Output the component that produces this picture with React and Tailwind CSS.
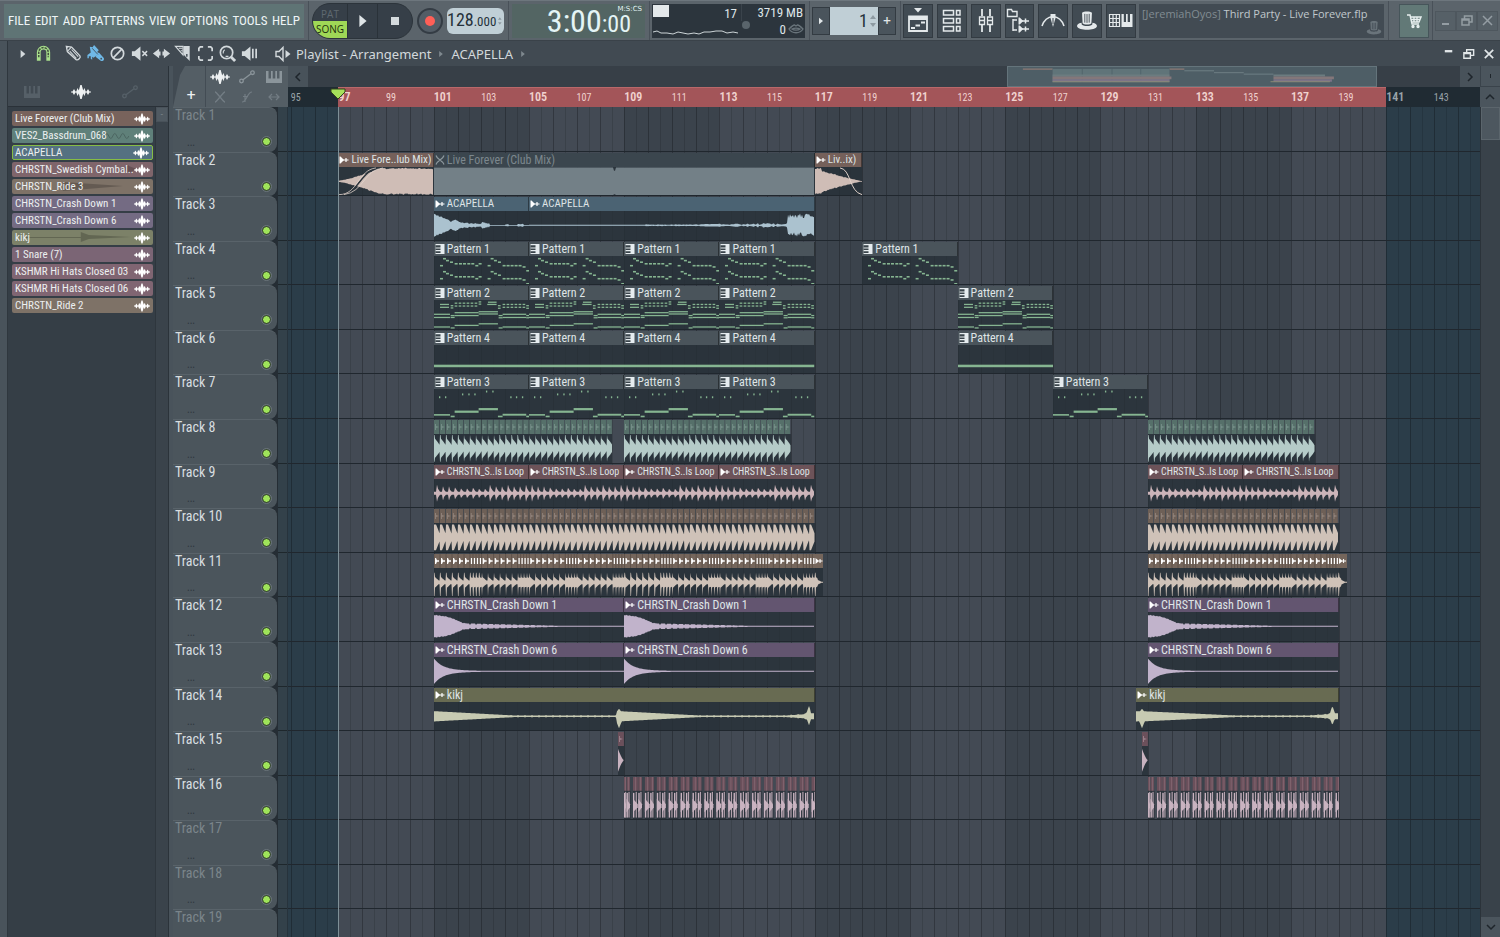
import React from "react";

const NARROW =
  "font-['Liberation_Sans_Narrow','Roboto_Condensed','Open_Sans_Condensed','Roboto',sans-serif]";
const SANS = "font-['Open_Sans','Noto_Sans',sans-serif]";
const TITLE = "font-['Noto_Sans','Open_Sans',sans-serif]";

/* ---------- timeline geometry ---------- */
const START = 94.88;
const SPAN = 50.06;
const BAR = 23.81;
const pct = (bar) => `${((bar - START) / SPAN) * 100}%`;
const wid = (bars) => `${(bars / SPAN) * 100}%`;

/* ---------- wave forms ---------- */
const rnd = (n) => {
  const s = Math.sin(n * 127.1 + 11.7) * 43758.5453;
  return s - Math.floor(s);
};

function envelope(w, fn, step = 1) {
  const top = [];
  const bottom = [];
  for (let x = 0; x <= w; x += step) {
    const v = fn(x, w);
    const [a, b] = Array.isArray(v) ? v : [v, v];
    top.push(`${x.toFixed(1)},${(15 - a).toFixed(2)}`);
    bottom.unshift(`${x.toFixed(1)},${(15 + b).toFixed(2)}`);
  }
  return `M${top.join("L")}L${bottom.join("L")}Z`;
}

const QUARTER = BAR / 4;
const BUSY = [0, 6, 12, 18, 24, 30, 36, 39, 42, 45];

const waves = {
  fadeIn: (x, w) => {
    const t = x / w;
    const base = t < 0.42 ? 0.6 + 13 * Math.pow(t / 0.42, 1.3) : 14.2;
    return [base - rnd(x) * 1.6 * Math.min(1, t * 3), base - rnd(x + 50) * 1.6 * Math.min(1, t * 3)];
  },
  fadeOut: (x, w) => {
    const t = x / w;
    const base = t < 0.14 ? 14.5 : Math.max(0.4, 14 * (1 - t) * (1.05 - 0.25 * t));
    return [base - rnd(x) * 2.2 * (1 - t), base - rnd(x + 9) * 2.2 * (1 - t)];
  },
  flat: (x, w) => (Math.abs(x - w * 0.474) < 1.2 ? [11, 13.5] : [14.6, 14.6]),
  vocalA: (x) => {
    const t = x / 95;
    if (t < 0.18) return 11 * (1 - t * 4) + rnd(x) * 1.6;
    if (t < 0.36) return 2 + 3.4 * Math.exp(-Math.pow((x - 21) / 4, 2)) + rnd(x);
    if (t < 0.58) return 1 + rnd(x) * 2.4;
    return 0.4 + (rnd(Math.floor(x / 3)) > 0.75 ? 1.4 * rnd(x) : 0);
  },
  vocalB: (x, w) => {
    const t = x / w;
    if (t < 0.4) return 0.5;
    if (t < 0.6) return 0.5 + rnd(x) * 0.5;
    if (t < 0.8) return 0.5 + rnd(Math.floor(x / 2)) * 1.1;
    if (t < 0.905) return 0.6 + rnd(Math.floor(x / 2)) * 1.8;
    return [7.5 + rnd(x) * 5.5, 7.5 + rnd(x + 3) * 5];
  },
  kick: (x) => {
    const t = (x % QUARTER) / QUARTER;
    return t < 0.12 ? 14 : 2.6 + 8.6 * Math.pow(1 - t, 0.8);
  },
  loop: (x) => {
    const i = Math.floor(x / QUARTER);
    const t = (x % QUARTER) / QUARTER;
    const peak = i % 3 === 0 ? 9 : 7.5;
    return t < 0.4 ? 1.6 : t < 0.52 ? peak : Math.max(1.8, peak * (1.15 - t) * 1.1);
  },
  ride: (x) => {
    const t = (x % QUARTER) / QUARTER;
    return t < 0.35 ? 13.5 : Math.max(2.4, 13.5 - 16 * (t - 0.35));
  },
  busy: (x, w) => {
    if (x > w - 6) return Math.max(0.5, (w - x) / 2 - 0.5);
    const p = x % (BAR * 2);
    let last = 0;
    for (const h of BUSY) if (h <= p) last = h;
    const t = p - last;
    const dense = last >= 36;
    return t < 0.6 ? [10, 14.5] : dense ? [5.6 - t * 0.4, 5.8 - t * 0.4] : [Math.max(2, 6.4 - t * 0.95), Math.max(2, 6.6 - t)];
  },
  crash1: (x) => {
    if (x < 31) return (x < 12 ? 12.4 - x * 0.1 : 11.4 - (x - 12) * 0.42) - rnd(x) * 1.2;
    return Math.max(0.5, 3.1 * (1 - (x - 31) / 115) * (Math.floor(x) % 6 === 0 ? 0.5 : 1));
  },
  crash6: (x) => Math.max(0.5, 12 * Math.exp(-x / 9) + 1.4 * Math.exp(-x / 50)),
  kikj: (spike, len) => (x, w) => {
    const end = w - x;
    const s = Math.abs(x - spike);
    if (s < 3 && spike > 0) return [8 - s * 1.4, 12.5 - s * 2.6];
    if (end < 10) return end < 8 && end > 4 ? [11 - Math.abs(end - 6) * 3, 9.5 - Math.abs(end - 6) * 3] : 3.2;
    const from = spike > 0 && x > spike ? x - spike : x;
    const rise = Math.max(0, 2.2 - end / 14);
    return Math.max(0.7 + (Math.floor(x) % 7 === 0 ? 0.7 : 0), 5.4 * (1 - from / len)) + rise;
  },
  snare: (x, w) => Math.max(0.5, 12 * Math.pow(1 - x / w, 1.4)),
};

function Wave({ bars, fn, color, step = 1, children }) {
  const w = bars * BAR;
  return (
    <svg className="block h-full w-full" viewBox={`0 0 ${w} 30`} preserveAspectRatio="none" aria-hidden="true">
      <path d={envelope(w, fn, step)} fill={color} />
      {children}
    </svg>
  );
}

/* ---------- pattern notes, drawn on a 286 x 90 field ---------- */
const lineNotes = (shift) =>
  [
    [18, 28], [27, 6], [36, 12], [48, 17], [62, 22], [75, 22], [87, 22], [100, 22], [112, 22], [124, 28], [134, 22],
    [161, 28], [170, 6], [180, 12], [192, 17], [206, 28], [218, 28], [230, 28], [242, 28], [254, 28], [266, 32], [277, 44],
  ].map(([x, y]) => [x, y + shift, 9, 5]);
const dashes = (x0, x1, y, gap = 12, w = 8) => {
  const out = [];
  for (let x = x0; x < x1 - 3; x += gap) out.push([x, y, w, 4]);
  return out;
};
const notes = {
  1: [...lineNotes(0), ...lineNotes(41)],
  2: [
    [18, 12, 27, 4], [18, 21, 27, 4], [50, 16, 8, 4], [50, 23, 8, 4],
    ...dashes(62, 130, 8), ...dashes(62, 130, 17), [134, 4, 8, 4], [134, 11, 8, 4],
    [162, 5, 26, 4], [160, 12, 28, 4], [192, 16, 8, 4], [192, 24, 8, 4],
    ...dashes(206, 276, 12), ...dashes(206, 276, 21), [277, 16, 8, 4], [277, 24, 8, 4],
    [0, 43, 48, 4], [0, 53, 48, 4], [50, 47, 12, 4], [50, 53, 12, 4],
    [62, 38, 72, 4], [62, 47, 72, 4], [134, 35, 58, 4], [134, 42, 58, 4],
    [194, 47, 12, 4], [194, 54, 12, 4], [206, 43, 71, 4], [206, 53, 71, 4], [277, 47, 9, 4], [277, 54, 9, 4],
    [0, 83, 48, 4], [50, 86, 12, 4], [62, 78, 72, 4], [134, 73, 58, 4], [194, 86, 12, 4], [206, 83, 71, 4], [277, 86, 9, 4],
  ],
  3: [
    ...[[15, 23], [33, 23], [84, 14], [103, 14], [121, 14], [156, 5], [175, 5], [229, 23], [246, 23], [264, 23]].map(
      ([x, y]) => [x, y, 4, 6]
    ),
    [0, 79, 48, 5], [50, 84, 12, 5], [62, 68, 72, 7], [134, 60, 58, 7], [192, 84, 14, 5], [206, 78, 71, 6], [277, 84, 9, 5],
  ],
  4: [[0, 62, 286, 8]],
};

function Notes({ id }) {
  return (
    <svg className="block h-full w-full" viewBox="0 0 286 90" preserveAspectRatio="none" aria-hidden="true">
      {notes[id].map(([x, y, w, h], i) => (
        <rect key={i} x={x} y={y} width={w} height={h} fill="#86b591" />
      ))}
    </svg>
  );
}

/* ---------- clips ---------- */
function AudioMark() {
  return (
    <svg className="h-2.5 w-2.5 shrink-0" viewBox="0 0 10 10" aria-hidden="true">
      <path d="M.5 1.500h1L5 5 1.500 8.500h-1z" fill="#fff" />
      <path d="M3 5h6.500M7 3v4" stroke="#fff" strokeWidth="1.200" />
    </svg>
  );
}
function PatternMark() {
  return (
    <svg className="h-2.5 w-2.5 shrink-0" viewBox="0 0 10 10" aria-hidden="true">
      <path d="M.5 0h9v10h-9z" fill="#e6ecef" />
      <path d="M.5 1.200h5v2.300h-5zM.5 4.600h5v1.500h-5zM.5 7.200h5v1.800h-5z" fill="#3a444b" />
    </svg>
  );
}
function MuteMark() {
  return (
    <svg className="h-2.5 w-2.5 shrink-0" viewBox="0 0 10 10" aria-hidden="true">
      <path d="M1 0.500C2 4.500 8 5.500 9 9.500M9 0.500C8 4.500 2 5.500 1 9.500" fill="none" stroke="#8d989e" strokeWidth="1.200" />
    </svg>
  );
}

const tones = {
  brown: { head: "bg-[#75605a]", text: "text-[11px]", wave: "#cfbdb6" },
  muted: { head: "bg-[#3b464e]", text: "text-xs", wave: "#738087" },
  blue: { head: "bg-[#4b6373]", text: "text-[11px]", wave: "#abc2cf" },
  pattern: { head: "bg-[#4a545b]", text: "text-xs", wave: "#8dbd98" },
  red: { head: "bg-[#6d5359]", text: "text-[10px]", wave: "#ccb4b9" },
  purple: { head: "bg-[#635570]", text: "text-xs", wave: "#c1b3cb" },
  olive: { head: "bg-[#686b52]", text: "text-xs", wave: "#c7cab2" },
};

function Clip({ from, to, label, tone, mark = "audio", children }) {
  const muted = mark === "mute";
  return (
    <div className="absolute inset-y-0 flex flex-col overflow-hidden pt-px" style={{ left: pct(from), width: wid(to - from) }}>
      <div
        className={`flex h-3.5 shrink-0 items-center gap-0.5 pl-px leading-3 whitespace-nowrap shadow-[inset_-1px_0_0_#0006] ${NARROW} ${tones[tone].head} ${
          tones[tone].text
        } ${muted ? "text-[#7c878d]" : "text-[#dfe4e6]"}`}
      >
        {mark === "audio" && <AudioMark />}
        {mark === "pattern" && <PatternMark />}
        {muted && <MuteMark />}
        <span>{label}</span>
      </div>
      <div className="min-h-0 flex-1 bg-[#272f37]/80">{children}</div>
    </div>
  );
}

/* A run of short one-shot clips, each with its own header block. */
function Hits({ from, to, blocks, head, tick, fn, wave }) {
  const w = (to - from) * BAR;
  return (
    <div className="absolute inset-y-0 flex flex-col pt-px" style={{ left: pct(from), width: wid(to - from) }}>
      <div className="h-3.5 shrink-0">
        <svg className="block h-full w-full" viewBox={`0 0 ${w} 14`} preserveAspectRatio="none" aria-hidden="true">
          {blocks.map(([x, bw], i) => (
            <g key={i}>
              <rect x={x} y="0" width={bw - 0.7} height="14" fill={head} />
              <path d={`M${x + 1} 4h1v2l3 1-3 1v2h-1z`} fill={tick} opacity="0.8" />
            </g>
          ))}
        </svg>
      </div>
      <div className="min-h-0 flex-1 bg-[#272f37]/80">
        <Wave bars={to - from} fn={fn} color={wave} step={0.5} />
      </div>
    </div>
  );
}

const even = (bars) => Array.from({ length: Math.round(bars * 4) }, (_, i) => [i * QUARTER, QUARTER]);

function BusyHits({ from, bars }) {
  const marks = [];
  for (let k = 0; k < bars / 2; k++) BUSY.forEach((h) => marks.push([k * BAR * 2 + h, h >= 36]));
  const total = bars + 0.36;
  const w = total * BAR;
  return (
    <div className="absolute inset-y-0 flex flex-col pt-px" style={{ left: pct(from), width: wid(total) }}>
      <div className="h-3.5 shrink-0 bg-[#75665c]">
        <svg className="block h-full w-full" viewBox={`0 0 ${w} 14`} preserveAspectRatio="none" aria-hidden="true">
          {marks.map(([x, dense], i) => (
            <g key={i}>
              <path d={dense ? `M${x + 0.8} 4h1.300v6h-1.300z` : `M${x + 1} 4h1l1 2.300h2v1.400h-2l-1 2.300h-1z`} fill="#fff" />
              <path d={`M${x} 0v14`} stroke="#4b413b" strokeWidth=".5" />
            </g>
          ))}
          <path d={`M${w - 8} 4l3.500 3-3.500 3zM${w - 6} 6.500h5v1h-5zM${w - 4} 5h1v4h-1z`} fill="#fff" />
        </svg>
      </div>
      <div className="min-h-0 flex-1 bg-[#272f37]/80">
        <Wave bars={total} fn={waves.busy} color="#cfc2b8" step={0.5} />
      </div>
    </div>
  );
}

const hatBlocks = [[0, 2], [2.5, 3.5]];
for (let x = 9; x < 188; x += BAR / 2) {
  hatBlocks.push([x, 4.8]);
  hatBlocks.push([x + 5.3, 3.7]);
}
function HatRun({ from, to }) {
  const w = (to - from) * BAR;
  return (
    <div className="absolute inset-y-0 flex flex-col pt-px" style={{ left: pct(from), width: wid(to - from) }}>
      <svg className="block h-full w-full" viewBox={`0 0 ${w} 43`} preserveAspectRatio="none" aria-hidden="true">
        {hatBlocks.map(([x, bw], i) => (
          <g key={i}>
            <rect x={x} y="0" width={bw} height="14" fill="#6b505b" />
            <rect x={x + bw / 2} y="0" width="0.6" height="14" fill="#8d6f7a" />
            <rect x={x} y="14" width={bw + 0.6} height="29" fill="#2b333b" />
            <rect x={x} y="16" width="1.400" height="25" fill="#c9b3c0" />
            <rect x={x + bw * 0.55} y="15" width="1.200" height="26" fill="#b5a2ae" />
            <path d={`M${x} 22l${bw} 5.500v3l${-bw} 5z`} fill="#c9b3c0" />
          </g>
        ))}
      </svg>
    </div>
  );
}

const four = (label, id) =>
  [101, 105, 109, 113].map((b) => (
    <Clip key={b} from={b} to={b + 4} label={label} tone="pattern" mark="pattern">
      <Notes id={id} />
    </Clip>
  ));
const one = (b, label, id) => (
  <Clip from={b} to={b + 4} label={label} tone="pattern" mark="pattern">
    <Notes id={id} />
  </Clip>
);
const audio = (from, to, label, tone, fn, extra) => (
  <Clip key={from} from={from} to={to} label={label} tone={tone}>
    <Wave bars={to - from} fn={fn} color={tones[tone].wave}>
      {extra}
    </Wave>
  </Clip>
);

const kicks = (from, to) => (
  <Hits from={from} to={to} blocks={even(to - from)} head="#56706a" tick="#7d9690" fn={waves.kick} wave="#b5cbc8" />
);
const rides = (from, to) => (
  <Hits from={from} to={to} blocks={even(to - from)} head="#6e6057" tick="#978a82" fn={waves.ride} wave="#cfc2b8" />
);
const snare = (from) => (
  <Hits from={from} to={from + 0.25} blocks={[[0, 6.6]]} head="#6b505b" tick="#a58a95" fn={waves.snare} wave="#c9b3c0" />
);

const fadeCurveIn = (
  <>
    <path d="M3 29C22 27 22 3 42 1" fill="none" stroke="#2b333b" strokeWidth="1.500" />
    <path d="M1 29C20 29 20 3 38 1M6 29C26 26 26 3 45 1" fill="none" stroke="#e2d3cc" strokeWidth=".8" />
  </>
);
const fadeCurveOut = <path d="M25 1C36 2 34 26 47 29" fill="none" stroke="#e2d3cc" />;

const lanes = [
  { name: "Track 1", dim: true },
  {
    name: "Track 2",
    clips: (
      <>
        {audio(97, 101, "Live Fore..lub Mix)", "brown", waves.fadeIn, fadeCurveIn)}
        <Clip from={101} to={117} label="Live Forever (Club Mix)" tone="muted" mark="mute">
          <Wave bars={16} fn={waves.flat} color="#738087" />
        </Clip>
        {audio(117, 119, "Liv..ix)", "brown", waves.fadeOut, fadeCurveOut)}
      </>
    ),
  },
  {
    name: "Track 3",
    clips: (
      <>
        {audio(101, 105, "ACAPELLA", "blue", waves.vocalA)}
        {audio(105, 117, "ACAPELLA", "blue", waves.vocalB)}
      </>
    ),
  },
  { name: "Track 4", clips: <>{four("Pattern 1", 1)}{one(119, "Pattern 1", 1)}</> },
  { name: "Track 5", clips: <>{four("Pattern 2", 2)}{one(123, "Pattern 2", 2)}</> },
  { name: "Track 6", clips: <>{four("Pattern 4", 4)}{one(123, "Pattern 4", 4)}</> },
  { name: "Track 7", clips: <>{four("Pattern 3", 3)}{one(127, "Pattern 3", 3)}</> },
  { name: "Track 8", clips: <>{kicks(101, 108.5)}{kicks(109, 116)}{kicks(131, 138)}</> },
  {
    name: "Track 9",
    clips: [101, 105, 109, 113, 131, 135].map((b) => audio(b, b + 4, "CHRSTN_S..ls Loop", "red", waves.loop)),
  },
  { name: "Track 10", clips: <>{rides(101, 117)}{rides(131, 139)}</> },
  { name: "Track 11", clips: <><BusyHits from={101} bars={16} /><BusyHits from={131} bars={8} /></> },
  { name: "Track 12", clips: [101, 109, 131].map((b) => audio(b, b + 8, "CHRSTN_Crash Down 1", "purple", waves.crash1)) },
  { name: "Track 13", clips: [101, 109, 131].map((b) => audio(b, b + 8, "CHRSTN_Crash Down 6", "purple", waves.crash6)) },
  {
    name: "Track 14",
    clips: (
      <>
        {audio(101, 117, "kikj", "olive", waves.kikj(185, 95))}
        {audio(130.5, 139, "kikj", "olive", waves.kikj(6, 110))}
      </>
    ),
  },
  { name: "Track 15", clips: <>{snare(108.75)}{snare(130.75)}</> },
  { name: "Track 16", clips: <><HatRun from={109} to={117} /><HatRun from={131} to={139} /></> },
  { name: "Track 17", dim: true },
  { name: "Track 18", dim: true },
  { name: "Track 19", dim: true, bare: true },
];

/* ---------- small icons ---------- */
const Svg = ({ box = "0 0 20 20", className = "size-5", children }) => (
  <svg className={className} viewBox={box} fill="none" stroke="currentColor" strokeWidth="1.500" aria-hidden="true">
    {children}
  </svg>
);
const Triangle = ({ className }) => (
  <svg className={className} viewBox="0 0 6 10" aria-hidden="true">
    <path d="M0 0l6 5-6 5z" fill="currentColor" />
  </svg>
);
const WaveIcon = ({ className = "h-3.5 w-5" }) => (
  <svg className={className} viewBox="0 0 20 14" fill="currentColor" aria-hidden="true">
    <path d="M0 6.400h1.500L3 4l1.500 2.400h.8l1.200-3.400 1.300 2.500L9.300 0h1.400l1.500 5.500L13.500 3l1.200 3.400h.8L17 4l1.500 2.400H20v1.200h-1.500L17 10l-1.500-2.400h-.8L13.500 11l-1.300-2.500L10.700 14H9.300L7.800 8.500 6.500 11 5.300 7.600h-.8L3 10 1.500 7.600H0z" />
  </svg>
);
const KeysIcon = ({ className = "h-3 w-4" }) => (
  <svg className={className} viewBox="0 0 16 12" aria-hidden="true">
    <path d="M0 0h2.500v7.500h2.500V0h1.700v7.500h2.600V0h1.700v7.500h2.500V0H16v12H0z" fill="currentColor" />
  </svg>
);
const LineIcon = ({ className = "h-3.5 w-4" }) => (
  <svg className={className} viewBox="0 0 16 14" fill="none" stroke="currentColor" strokeWidth="1.300" aria-hidden="true">
    <circle cx="2.500" cy="11" r="1.800" />
    <circle cx="13.500" cy="2.700" r="1.800" />
    <path d="M4 9.800l8-6" />
  </svg>
);
const HatIcon = ({ className = "size-5" }) => (
  <svg className={className} viewBox="0 0 20 20" aria-hidden="true">
    <path d="M5.500 2.500c1.500-1.500 7.500-1.500 9 0L14 12c-1 1.500-7 1.500-8 0z" fill="currentColor" />
    <path d="M8 3.500v8M10 3.700v8M12 3.500v8" stroke="#3c464e" strokeWidth=".8" />
    <path d="M5 11.500C2 12 .5 13.500 1 15c1.500 4 16.500 4 18 0 .5-1.500-1-3-4-3.500l-.3 2c-2 1.500-7.400 1.500-9.400 0z" fill="currentColor" />
  </svg>
);
const Spinner = () => (
  <svg className="h-4 w-1.5" viewBox="0 0 6 16" fill="#8d9aa1" aria-hidden="true">
    <path d="M0 6l3-4 3 4zM0 10l3 4 3-4z" />
  </svg>
);
const Sep = () => <span className="h-full w-px shrink-0 bg-[#495159]" />;

const toolIcons = [
  {
    name: "Snap",
    cls: "text-[#a9e08c] mr-[11px]",
    draw: (
      <>
        <path d="M5 17.500V8.800a5 5 0 0 1 10 0V17.500" strokeWidth="4" />
        <path d="M5 14V8.800a5 5 0 0 1 10 0V14" strokeWidth="1.600" stroke="#41503f" strokeDasharray="2.500 1" />
      </>
    ),
  },
  {
    name: "Draw",
    draw: (
      <>
        <path d="M2.500 2.500l5.500.800 8.800 9.200c1.200 1.700-2 5-4 3.900L3.500 8z" strokeWidth="1.400" />
        <path d="M3.800 7.600l4-4.200M6 7.500l7 7.500M8 5.800l7 7.500" strokeWidth="1.100" />
        <path d="M2 2l3 .5L2.500 5z" fill="currentColor" stroke="none" />
      </>
    ),
  },
  {
    name: "Paint",
    cls: "text-[#6fb8e6]",
    draw: (
      <>
        <path d="M4 3l3 .500L8.500 1l5 5.500L12 8l1 2.500-5 4-1.500-1v3l-1.500-1V13H3v2H1.500v-3.500L5 9z" fill="currentColor" stroke="none" />
        <path d="M12 10l1.500-1 5 5.500c1.500 2-1 4.500-3 3L10 13.500z" fill="currentColor" stroke="none" />
        <path d="M6.500 4.500l6 6.500" stroke="#414a52" strokeWidth=".9" />
        <circle cx="16" cy="15.500" r=".9" fill="#414a52" stroke="none" />
      </>
    ),
  },
  { name: "Delete", draw: <><circle cx="10" cy="10" r="6.500" strokeWidth="1.800" /><path d="M5.500 14.500l9-9" strokeWidth="1.800" /></> },
  {
    name: "Mute",
    draw: (
      <>
        <path d="M2 7.500h3l6-5v15l-6-5H2z" fill="currentColor" stroke="none" />
        <path d="M13 7.500l5 5M18 7.500l-5 5" />
      </>
    ),
  },
  { name: "Slip", draw: <path d="M1 10l6.500-5v3H9v4H7.500v3zM19 10l-6.500-5v3H11v4h1.500v3z" fill="currentColor" stroke="none" /> },
  {
    name: "Slice",
    draw: (
      <>
        <path d="M1.500 2.500h8v9z" strokeWidth="1.200" />
        <path d="M5 4.500h4M7 7h2" strokeWidth="1.100" />
        <path d="M10 2h6.500v16L10 11z" fill="currentColor" stroke="none" />
        <path d="M13.500 10.500v3" stroke="#414a52" />
      </>
    ),
  },
  { name: "Select", draw: <path d="M3 7.500V4.500L4.500 3h3M12.500 3h3L17 4.500v3M17 12.500v3L15.500 17h-3M7.500 17h-3L3 15.500v-3" strokeWidth="1.800" /> },
  { name: "Zoom", draw: <><circle cx="9" cy="9" r="6.500" strokeWidth="1.800" /><path d="M5.500 10a4 4 0 0 1 1.500-4M8 13h3" strokeWidth="1.200" /><path d="M13.500 13.500l4.500 4.500" strokeWidth="3" /></> },
  {
    name: "Preview",
    draw: (
      <>
        <path d="M2 7.500h3l6-5v15l-6-5H2z" fill="currentColor" stroke="none" />
        <path d="M13.500 5v10M17 5v10" strokeWidth="1.800" />
      </>
    ),
  },
];

const panels = [
  {
    name: "Playlist",
    draw: (
      <>
        <path d="M9 0h8l-4 4.500z" fill="currentColor" stroke="none" />
        <path d="M4 8.500h18V23H4z" strokeWidth="1.800" />
        <path d="M4 10.500h18" strokeWidth="3" />
        <path d="M6 20h4M10.500 17.500h4.500M16 14.500h4" strokeWidth="2.200" />
      </>
    ),
  },
  {
    name: "Channel rack",
    draw: <path d="M4.500 2.500h10v4.500h-10zM4.500 10.500h10V15h-10zM4.500 18.500h10V23h-10zM17.500 2.500h3.500v4.500h-3.500zM17.500 10.500h3.500V15h-3.500zM17.500 18.500h3.500V23h-3.500z" />,
  },
  {
    name: "Mixer",
    draw: (
      <>
        <path d="M9 1v7M17 1v7M9 17v7M17 17v7" strokeWidth="1.800" />
        <path d="M6.500 9h5v7.500h-5zM14.500 9h5v7.500h-5zM6.500 12.500h5M14.500 12.500h5" strokeWidth="1.300" />
      </>
    ),
  },
  {
    name: "Browser",
    draw: (
      <>
        <path d="M1.500 1.500h4l1 2h4.500v5H1.500zM7 12h4M7 22h4M7 11v12" strokeWidth="1.400" />
        <path d="M12.500 9.500h1.200l3.500 3.500-3.500 3.500h-1.200zM12.500 17.500h1.200l3.500 3.500-3.500 3.500h-1.200z" fill="currentColor" stroke="none" />
        <path d="M16 13h7M19.500 10.500v5M16 21h7M19.500 18.500v5" />
      </>
    ),
  },
  {
    name: "Plugin picker",
    draw: (
      <>
        <path d="M2 18C4 12 8 9 13 8.500c5 .5 9 3.500 11 9.500" strokeWidth="1.600" />
        <path d="M10.500 6h5v4L13 19l-2.500-9z" fill="currentColor" stroke="none" />
        <path d="M13 4v2M13 10v6" stroke="#39434b" strokeWidth="1" />
      </>
    ),
  },
  { name: "Tutorial", hat: true },
  {
    name: "Touch keyboard",
    draw: (
      <>
        <path d="M1.500 6.500h10v12h-10zM5 6.500v12M8.300 6.500v12M1.500 10.500h10M1.500 14.500h10" strokeWidth="1.200" />
        <path d="M13.500 6h2.300v8H18V6h1.700v8H22V6h2.500v13h-11z" fill="currentColor" stroke="none" />
      </>
    ),
  },
];

const picker = [
  ["Live Forever (Club Mix)", "bg-[#78635c]"],
  ["VES2_Bassdrum_068", "bg-[#5f807a]"],
  ["ACAPELLA", "bg-[#557181]"],
  ["CHRSTN_Swedish Cymbal..", "bg-[#7f656b]"],
  ["CHRSTN_Ride 3", "bg-[#7e7267]"],
  ["CHRSTN_Crash Down 1", "bg-[#746b83]"],
  ["CHRSTN_Crash Down 6", "bg-[#746b83]"],
  ["kikj", "bg-[#7c8168]"],
  ["1 Snare (7)", "bg-[#7b6575]"],
  ["KSHMR Hi Hats Closed 03", "bg-[#806572]"],
  ["KSHMR Hi Hats Closed 06", "bg-[#806572]"],
  ["CHRSTN_Ride 2", "bg-[#7e7267]"],
];
const pickerWaves = {
  1: "M84 8q2-5 4 0t4 0 4 0 4 0 4 0 4 0 4 0 4 0",
  3: "M20 7h90l6-4v8l-6-4M116 4l8 3-8 4z",
  4: "M50 3l60 4-60 5z",
  7: "M10 7h58V2l8 3 42 2-42 2-8 3V8H10z",
};

/* ---------- top bar ---------- */
function TopBar() {
  return (
    <header className="flex h-[41px] shrink-0 items-center border-y border-[#6d767d] border-b-[#3a4249] bg-[#5b646b] pl-1">
      <nav className={`flex h-[34px] w-[300px] shrink-0 items-center justify-between bg-[#5f7475] px-1 text-[#eef4f5] ${NARROW}`}>
        {["FILE", "EDIT", "ADD", "PATTERNS", "VIEW", "OPTIONS", "TOOLS", "HELP"].map((m) => (
          <button key={m} className="text-[13px] leading-5">
            {m}
          </button>
        ))}
      </nav>
      <div className="ml-1 flex h-full"><Sep /></div>
      <div className="ml-[3px] flex h-9 w-[101px] shrink-0 overflow-hidden rounded-[18px] border border-[#2c343b] bg-[#363f48]">
        <div className={`flex w-[34px] flex-col text-center text-[10px] ${SANS}`}>
          <button className="h-[17px] pt-0.5 leading-4 text-[#5f6970]">PAT</button>
          <button className="flex-1 bg-[#9fd856] leading-4 text-[#22300f]">SONG</button>
        </div>
        <button aria-label="Play" className="flex w-[31px] items-center justify-center border-x border-[#2a3239] text-[#dfe5e7]">
          <Triangle className="h-3 w-2" />
        </button>
        <button aria-label="Stop" className="flex flex-1 items-center justify-center">
          <span className="size-2 bg-[#d4dadd]" />
        </button>
      </div>
      <button aria-label="Record" className="ml-1 flex size-[26px] shrink-0 items-center justify-center rounded-full border-2 border-[#343c44] bg-[#535d66]">
        <span className="size-2.5 rounded-full bg-[#ff5f57]" />
      </button>
      <div className={`ml-1 flex h-[26px] w-[57px] shrink-0 items-center justify-end gap-0.5 rounded-md bg-[#c0cfd6] pr-0.5 text-[#25313a] ${NARROW}`}>
        <span className="text-lg leading-6">128<span className="text-[13px]">.000</span></span>
        <Spinner />
      </div>
      <div className="ml-1 flex h-full"><Sep /></div>
      <div className={`ml-[3px] flex h-[34px] w-[133px] shrink-0 justify-end bg-[#536563] pr-1 text-[#e4f4f5] ${NARROW}`}>
        <div className="relative flex items-baseline pr-2.5">
          <span className="text-[32px] leading-[34px]">3:00</span>
          <span className="text-2xl leading-[34px]">:00</span>
          <span className="absolute top-0 -right-px font-['DejaVu_Sans'] text-[7px] leading-[10px]">M:S:CS</span>
        </div>
      </div>
      <div className="ml-1 flex h-full"><Sep /></div>
      <div className={`ml-0.5 grid h-[34px] w-[153px] shrink-0 grid-cols-[90px_1fr] grid-rows-2 bg-[#2c353d] text-[13px] leading-[17px] text-[#dfe6e9] ${NARROW}`}>
        <div className="flex justify-between border-r border-[#3a434b] pt-px pr-1 pl-px">
          <span className="h-3 w-4 bg-[#e3e8ea]" />
          <span>17</span>
        </div>
        <div className="pr-0.5 text-right">3719 MB</div>
        <svg className="h-full w-full" viewBox="0 0 90 17" preserveAspectRatio="none" aria-hidden="true">
          <path d="M1 11l4-1 4 2 6 0 6 1 5-2 5 1 5 1 6-1 5 1 5-2 6 0 6-1 6 0 5 2 6-1 5 1" fill="none" stroke="#cdd5d8" />
        </svg>
        <div className="flex items-center justify-end gap-0.5 pr-px">
          <span className="mr-auto mb-2 size-2 rounded-sm bg-[#59646b]" />
          <span>0</span>
          <svg className="h-3 w-4" viewBox="0 0 16 12" fill="none" stroke="#69747b" aria-hidden="true">
            <path d="M1 6c2-2 4-4 5.500-4L8 3l1.500-1C11 2 13 4 15 6c-3 5-11 5-14 0zM4 6c2 1.500 6 1.500 8 0-2-1-6-1-8 0z" strokeWidth="1.300" />
          </svg>
        </div>
      </div>
      <div className="ml-1 flex h-full"><Sep /></div>
      <div className="ml-0.5 flex h-7 w-[84px] shrink-0">
        <button aria-label="Pattern menu" className="flex w-[18px] items-center justify-center border border-[#333b42] bg-[#4a545c] text-[#e1e6e8]">
          <Triangle className="h-2 w-1" />
        </button>
        <div className={`flex flex-1 items-center justify-end gap-0.5 bg-[#c0cfd6] pr-0.5 text-lg leading-6 text-[#25313a] ${NARROW}`}>
          <span>1</span>
          <Spinner />
        </div>
        <button aria-label="Add pattern" className={`w-[18px] border border-[#333b42] bg-[#4a545c] text-sm leading-6 font-semibold text-[#e1e6e8] ${SANS}`}>
          +
        </button>
      </div>
      <div className="ml-1 flex h-full"><Sep /></div>
      <div className="ml-0.5 grid h-[34px] w-[233px] shrink-0 grid-cols-7 gap-1">
        {panels.map((p) => (
          <button key={p.name} aria-label={p.name} className="flex items-center justify-center border border-[#333b42] bg-[#414b53] text-[#e4e9eb]">
            {p.hat ? <HatIcon className="size-[22px]" /> : <Svg box="0 0 26 26" className="size-[26px]">{p.draw}</Svg>}
          </button>
        ))}
      </div>
      <div className={`relative ml-[3px] h-[34px] min-w-0 flex-1 bg-[#424b53] pl-[3px] text-[11px] leading-5 whitespace-nowrap text-[#c0c8cc] ${SANS}`}>
        <span className="text-[#818b92]">[JeremiahOyos]</span> Third Party - Live Forever.flp
        <HatIcon className="absolute right-0.5 bottom-0.5 size-4 text-[#6a747b]" />
      </div>
      <div className="ml-1 flex h-full"><Sep /></div>
      <button aria-label="Shop" className="ml-2.5 flex h-[34px] w-[30px] shrink-0 items-center justify-center border border-[#46555a] bg-[#627977] text-[#e7efef]">
        <svg className="size-4" viewBox="0 0 16 16" fill="none" stroke="currentColor" strokeWidth="1.400" aria-hidden="true">
          <path d="M1 2h3l2 9h7M4.500 4H15l-2 5H6M5 6.500h9M8 4v5M11 4v5" />
          <circle cx="7" cy="13.500" r="1" fill="currentColor" />
          <circle cx="12" cy="13.500" r="1" fill="currentColor" />
        </svg>
      </button>
      <div className="ml-[3px] flex h-full"><Sep /></div>
      <div className="mx-0.5 flex shrink-0 text-[#949da3]">
        {[
          ["Minimize", <path key="p" d="M4 11h7" strokeWidth="2" />],
          ["Restore", <path key="p" d="M3 6h7v6H3zM5.500 5.500V3H13v6h-2.500M3 7h7" />],
          ["Close", <path key="p" d="M3 3l9 9M12 3l-9 9" />],
        ].map(([n, d]) => (
          <button key={n} aria-label={n} className="flex h-5 w-[21px] items-center justify-center border border-[#4e575e] bg-[#566067]">
            <Svg box="0 0 15 15" className="size-[15px]">{d}</Svg>
          </button>
        ))}
      </div>
    </header>
  );
}

function TitleBar() {
  return (
    <div className="flex h-[25px] shrink-0 items-center bg-[#414a52] pr-1 pl-3 text-[#d3d9dc]">
      <Triangle className="mr-2 h-2 w-1.5" />
      <div className="flex items-center">
        {toolIcons.map((t) => (
          <button key={t.name} aria-label={t.name} className={t.name === "Snap" ? t.cls : `mr-[3px] ${t.cls ?? ""}`}>
            <Svg className="size-[19px]">{t.draw}</Svg>
          </button>
        ))}
      </div>
      <Svg className="ml-3 size-[18px]" box="0 0 18 18">
        <path d="M2 6.500h3l4-4v13l-4-4H2z" strokeWidth="1.400" />
        <path d="M11.500 5l5 4-5 4z" fill="currentColor" stroke="none" />
      </Svg>
      <h1 className={`ml-1 flex items-center gap-2 text-[13px] leading-5 ${TITLE}`}>
        <span>Playlist - Arrangement</span>
        <Triangle className="h-1.5 w-1 text-[#7f898f]" />
        <span>ACAPELLA</span>
        <Triangle className="h-1.5 w-1 text-[#7f898f]" />
      </h1>
      <div className="ml-auto flex gap-1.5 text-[#e2e7e9]">
        {[
          ["Minimize window", <path key="p" d="M3 4.500h8" strokeWidth="2.500" />],
          ["Restore window", <path key="p" d="M2 6h7v6H2zM5 5.500V3h7.500v6H9.500M2 7h7" />],
          ["Close window", <path key="p" d="M3 3l9 9M12 3l-9 9" strokeWidth="1.800" />],
        ].map(([n, d]) => (
          <button key={n} aria-label={n}>
            <Svg box="0 0 15 15" className="size-3.5">{d}</Svg>
          </button>
        ))}
      </div>
    </div>
  );
}

function Picker() {
  return (
    <aside className="flex w-[160px] shrink-0 flex-col bg-[#353e46]">
      <div className="flex h-[41px] shrink-0 items-center justify-between border-b border-[#2a3138] bg-[#414a52] pt-3 pr-[30px] pl-4">
        <KeysIcon className="h-3 w-4 text-[#566068]" />
        <WaveIcon className="h-3.5 w-5 text-[#eef1f2]" />
        <LineIcon className="h-3.5 w-4 text-[#566068]" />
      </div>
      <div className="flex flex-1">
        <ul className={`flex flex-1 flex-col gap-0.5 pt-1 pr-0.5 pl-1 text-[11px] text-[#eceff0] ${NARROW}`}>
          {picker.map(([name, color], i) => (
            <li
              key={name}
              className={`relative flex h-[15px] items-center justify-between overflow-hidden rounded-xs pr-[3px] leading-[15px] whitespace-nowrap ${color} ${
                i === 2 ? "border border-[#86bd45] pl-0.5" : "pl-[3px]"
              }`}
            >
              {pickerWaves[i] && (
                <svg className="absolute inset-0 h-full w-full" viewBox="0 0 139 15" fill={i === 1 ? "none" : "#000"} stroke={i === 1 ? "#000" : "none"} opacity=".2" aria-hidden="true">
                  <path d={pickerWaves[i]} />
                </svg>
              )}
              <span className="relative">{name}</span>
              <WaveIcon className="relative h-3 w-4 shrink-0 text-white" />
            </li>
          ))}
        </ul>
        <div className="w-[17px] border-l border-[#2e363d] bg-[#3a434b]">
          <div className="h-[15px] border border-[#49525a] bg-[#505a62] text-center text-[8px] leading-3 text-[#7d878d]">-</div>
        </div>
      </div>
    </aside>
  );
}

/* ---------- overview strip ---------- */
function Overview() {
  return (
    <div className="flex h-[21px] bg-[#373f47]">
      <button aria-label="Scroll left" className="flex w-5 items-center justify-center bg-[#48525a] text-[#1e252b]">
        <Svg box="0 0 10 10" className="size-2.5"><path d="M7 1L3 5l4 4" /></Svg>
      </button>
      <div className="flex-1" />
      <div className="h-full w-[31%] border border-[#64747b] bg-[#4e5e66]">
        <svg className="block h-full w-full" viewBox="0 0 371 20" preserveAspectRatio="none" aria-hidden="true">
          <path d="M15 1.500h30V3H15zM163 1.500h15V3h-15z" fill="#8d7a74" />
          <path d="M45 2h118v14H45z" fill="#607479" />
          <path d="M75 2v14M105 2v14M134 2v14" stroke="#4e6067" strokeWidth=".8" />
          <path d="M45 8h118v2H45zM268 8h52v2h-52z" fill="#6c7c80" />
          <path d="M45 10h120v3H45zM268 10h61v3h-61z" fill="#84777a" />
          <path d="M45 13h118v2.500H45zM268 13h59v2.500h-59z" fill="#7d7488" />
          <path d="M178 4h30M208 6h30M238 7.500h30" stroke="#6f8085" />
          <path d="M265 15.500h60M45 15.500h118" stroke="#8b8a77" />
        </svg>
      </div>
      <div className="w-[83px]" />
      <button aria-label="Scroll right" className="flex w-5 items-center justify-center bg-[#48525a] text-[#1e252b]">
        <Svg box="0 0 10 10" className="size-2.5"><path d="M3 1l4 4-4 4" /></Svg>
      </button>
    </div>
  );
}

const rulerBars = Array.from({ length: 25 }, (_, i) => 95 + i * 2);

function Ruler() {
  return (
    <div className={`relative h-5 bg-[#202b33] ${NARROW}`}>
      <div className="absolute inset-y-0 border-t border-[#b9686a] bg-[#a35559]" style={{ left: pct(97), width: wid(44) }} />
      {rulerBars.map((b) => {
        const major = (b - 97) % 4 === 0;
        const inside = b >= 97 && b < 141;
        return (
          <span
            key={b}
            className={`absolute leading-[18px] ${major ? "top-px text-xs font-semibold" : "top-0.5 text-[10px]"} ${
              inside ? "text-[#f0d2cf]" : "text-[#9aa4aa]"
            }`}
            style={{ left: pct(b) }}
          >
            {b}
          </span>
        );
      })}
      <svg className="absolute top-px -ml-2 h-3 w-4" style={{ left: pct(97) }} viewBox="0 0 16 12" aria-hidden="true">
        <path d="M1 1h14v3L8 11 1 4z" fill="#a6e05a" stroke="#33451c" />
      </svg>
    </div>
  );
}

function GridLines() {
  const sections = [];
  for (let b = 97; b < 141; b += 4) sections.push(b);
  const halves = [];
  for (let b = 95; b < 145; b += 0.5) halves.push(b);
  return (
    <div className="absolute inset-0 bg-[#2b3d49]" aria-hidden="true">
      {sections.map((b, i) => (
        <div key={b} className={`absolute inset-y-0 ${i % 2 ? "bg-[#3b434c]" : "bg-[#434a54]"}`} style={{ left: pct(b), width: wid(4) }} />
      ))}
      {halves.map((b) => (
        <div
          key={b}
          className={`absolute inset-y-0 w-px ${b % 1 === 0 ? "bg-black/25" : "bg-black/12"}`}
          style={{ left: pct(b) }}
        />
      ))}
    </div>
  );
}

function TrackHeader({ name, dim, bare }) {
  return (
    <div className="flex flex-col justify-between rounded-r-lg border-t border-[#59636a] bg-[#4b555c] pr-1.5 pb-1 pl-0.5">
      <span className={`text-sm leading-[14px] ${NARROW} ${dim ? "text-[#7b858b]" : "text-[#d8dee0]"}`}>{name}</span>
      {!bare && (
        <div className="flex items-center justify-between pl-3">
          <span className="text-[10px] leading-3 text-[#2f373e]">...</span>
          <button aria-label={`Mute ${name}`} className="size-[9px] rounded-full border border-[#2a3526] bg-[#9fe45a] outline outline-[#6a747a]" />
        </div>
      )}
    </div>
  );
}

function Playlist() {
  return (
    <main className="flex min-w-0 flex-1 flex-col overflow-hidden">
      <div className="flex h-[41px] shrink-0">
        <div className="flex w-[115px] shrink-0 bg-[#414a52] text-[#eef1f2]">
          <button
            aria-label="Add track"
            className={`w-8 bg-[#545e65] pt-4 pl-1 text-base leading-5 font-semibold [clip-path:polygon(12px_0,100%_0,100%_100%,0_100%,7px_9px)] ${SANS}`}
          >
            +
          </button>
          <div className="grid flex-1 grid-cols-3 place-items-center border-l border-[#434c54] bg-[#545e65]">
            <WaveIcon className="h-3.5 w-5" />
            <LineIcon className="h-3.5 w-4 text-[#8b959b]" />
            <KeysIcon className="h-3 w-4 text-[#8b959b]" />
            <Svg box="0 0 12 12" className="size-3 text-[#737d84]"><path d="M1 1c2 0 8 10 10 10M11 1C9 1 3 11 1 11" strokeWidth="1.300" /></Svg>
            <Svg box="0 0 12 12" className="size-3 text-[#737d84]"><path d="M1 11c5 0 5-10 10-10M4 3v8M2 5.500h5" strokeWidth="1.200" /></Svg>
            <Svg box="0 0 12 12" className="size-3 text-[#737d84]"><path d="M4 3L1 6l3 3M8 3l3 3-3 3M1 6h10" strokeWidth="1.200" /></Svg>
          </div>
        </div>
        <div className="min-w-0 flex-1">
          <Overview />
          <Ruler />
        </div>
        <div className="flex w-5 shrink-0 flex-col bg-[#4b555d]">
          <div className="flex h-[21px] items-center justify-center border-b border-l border-[#3a434b]">
            <span className="h-1 w-px bg-[#1e252b]" />
          </div>
          <button aria-label="Scroll up" className="flex h-5 items-center justify-center text-[#1e252b]">
            <Svg box="0 0 10 10" className="size-2.5"><path d="M1 7l4-4 4 4" /></Svg>
          </button>
        </div>
      </div>
      <div className="flex min-h-0 flex-1 overflow-hidden">
        <div className="grid h-[847px] w-[105px] shrink-0 grid-rows-[repeat(19,minmax(0,1fr))] bg-[#252d34] pr-px">
          {lanes.map((t) => (
            <TrackHeader key={t.name} {...t} />
          ))}
        </div>
        <div className="grid h-[847px] w-2.5 shrink-0 grid-rows-[repeat(19,minmax(0,1fr))] border-r border-[#27333c] bg-[#33414a]">
          {lanes.map((t) => (
            <div key={t.name} className="border-b border-black/40" />
          ))}
        </div>
        <div className="relative h-[847px] min-w-0 flex-1 overflow-hidden">
          <GridLines />
          <div className="relative grid h-full grid-rows-[repeat(19,minmax(0,1fr))]">
            {lanes.map((t) => (
              <section key={t.name} aria-label={t.name} className="relative border-b border-[#20272e]">
                {t.clips}
              </section>
            ))}
          </div>
          <div className="absolute inset-y-0 w-px bg-[#7f9097]" style={{ left: pct(97) }} />
        </div>
        <div className="flex w-5 shrink-0 flex-col justify-between border-l border-[#2b333a] bg-[#39424a]">
          <div className="h-[33px] border border-[#5b656c] bg-[#4d575f]" />
          <button aria-label="Scroll down" className="flex h-5 items-center justify-center bg-[#4b555d] text-[#1e252b]">
            <Svg box="0 0 10 10" className="size-2.5"><path d="M1 3l4 4 4-4" /></Svg>
          </button>
        </div>
      </div>
    </main>
  );
}

export default function App() {
  return (
    <div className="flex h-screen flex-col overflow-hidden bg-[#414a52]">
      <TopBar />
      <div className="flex min-h-0 flex-1">
        <div className="w-2 shrink-0 border-r border-[#2f373e] bg-[#49535b]" />
        <div className="flex min-w-0 flex-1 flex-col">
          <TitleBar />
          <div className="flex min-h-0 flex-1">
            <Picker />
            <div className="w-[5px] shrink-0 border-l border-[#2b333a] bg-[#49535b]" />
            <Playlist />
          </div>
        </div>
      </div>
    </div>
  );
}
